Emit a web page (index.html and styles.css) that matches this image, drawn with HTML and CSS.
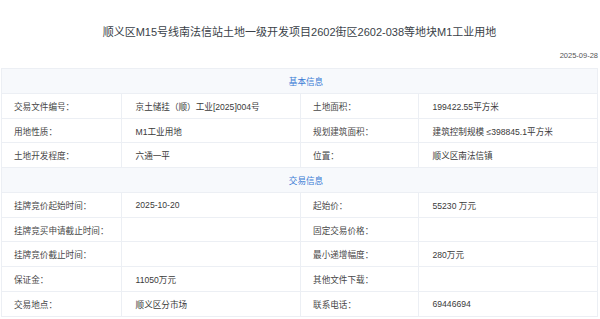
FILE: index.html
```html
<!DOCTYPE html>
<html lang="zh-CN">

<head>
    <meta charset="UTF-8">
    <meta name="viewport" content="width=device-width, initial-scale=1.0">
    <title>地块详情</title>
    <link rel="stylesheet" href="styles.css">
</head>

<body>
    <div class="detail">
        <h1 class="detail-title">顺义区M15号线南法信站土地一级开发项目2602街区2602-038等地块M1工业用地</h1>
        <div class="detail-date">2025-09-28</div>

        <table class="info-table">
            <colgroup>
                <col class="col-label">
                <col class="col-value">
                <col class="col-label">
                <col class="col-value">
            </colgroup>
            <tr>
                <th colspan="4">基本信息</th>
            </tr>
            <tr>
                <td class="label">交易文件编号：</td>
                <td>京土储挂（顺）工业[2025]004号</td>
                <td class="label">土地面积：</td>
                <td>199422.55平方米</td>
            </tr>
            <tr>
                <td class="label">用地性质：</td>
                <td>M1工业用地</td>
                <td class="label">规划建筑面积：</td>
                <td>建筑控制规模 ≤398845.1平方米</td>
            </tr>
            <tr>
                <td class="label">土地开发程度：</td>
                <td>六通一平</td>
                <td class="label">位置：</td>
                <td>顺义区南法信镇</td>
            </tr>
            <tr>
                <th colspan="4">交易信息</th>
            </tr>
            <tr>
                <td class="label">挂牌竞价起始时间：</td>
                <td>2025-10-20</td>
                <td class="label">起始价：</td>
                <td>55230 万元</td>
            </tr>
            <tr>
                <td class="label">挂牌竞买申请截止时间：</td>
                <td></td>
                <td class="label">固定交易价格：</td>
                <td></td>
            </tr>
            <tr>
                <td class="label">挂牌竞价截止时间：</td>
                <td></td>
                <td class="label">最小递增幅度：</td>
                <td>280万元</td>
            </tr>
            <tr>
                <td class="label">保证金：</td>
                <td>11050万元</td>
                <td class="label">其他文件下载：</td>
                <td></td>
            </tr>
            <tr>
                <td class="label">交易地点：</td>
                <td>顺义区分市场</td>
                <td class="label">联系电话：</td>
                <td>69446694</td>
            </tr>
        </table>
    </div>
</body>

</html>
```

FILE: styles.css
```css
* {
    margin: 0;
    padding: 0;
    box-sizing: border-box;
}

body {
    background: #fff;
    font-family: "Liberation Sans", "Noto Sans CJK SC", sans-serif;
    color: #333;
}

.detail {
    padding: 25px 2px 0 1px;
}

.detail-title {
    font-size: 11px;
    font-weight: normal;
    line-height: 14px;
    text-align: center;
    color: #3a3f48;
}

.detail-date {
    margin-top: 12px;
    font-size: 7.5px;
    line-height: 10px;
    text-align: right;
    color: #555;
}

.info-table {
    width: 100%;
    margin-top: 7px;
    border-collapse: collapse;
    font-size: 8.6px;
}

.col-label {
    width: 19.8%;
}

.col-value {
    width: 30.2%;
}

.info-table th {
    height: 25px;
    padding-left: 13px;
    font-weight: normal;
    color: #3a7bd5;
    background: #f7f9fc;
    border: 1px solid #eceff4;
    text-align: center;
}

.info-table td {
    height: 24.7px;
    padding: 0 12px 0 14px;
    border: 1px solid #eceff4;
    color: #3a3a3a;
    white-space: nowrap;
}

.info-table td.label {
    padding-left: 12px;
    color: #484848;
}
```
